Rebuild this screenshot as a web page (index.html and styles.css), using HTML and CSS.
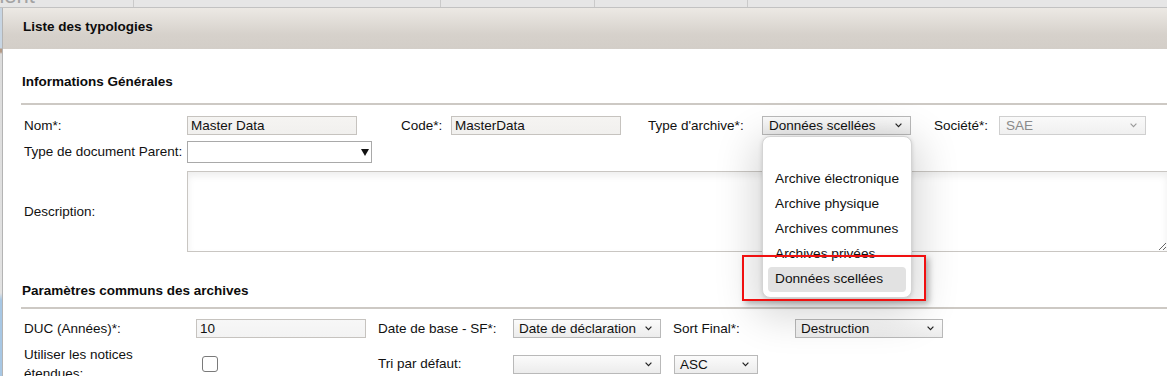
FILE: index.html
```html
<!DOCTYPE html>
<html lang="fr">
<head>
<meta charset="utf-8">
<title>Liste des typologies</title>
<link rel="stylesheet" href="styles.css">
</head>
<body>
<div class="topbar">
  <div class="tab tab1"><span class="ghost">ment</span></div>
  <div class="tab tab2"></div>
  <div class="tab tab3"></div>
  <div class="tab tab4"></div>
  <div class="tab tab5"></div>
</div>
<div class="stage">
  <div class="edge"></div>
  <div class="dialog">
    <div class="dlg-head">Liste des typologies</div>
    <div class="dlg-body">
      <h2 class="sec-title sec1">Informations Générales</h2>

      <div class="row row-a">
        <span class="lbl first w-first1">Nom*:</span>
        <div class="inp w170">Master Data</div>
        <span class="lbl ml44 w50">Code*:</span>
        <div class="inp w170">MasterData</div>
        <span class="lbl ml27 w114">Type d'archive*:</span>
        <div class="sel-wrap">
          <div class="sel w149">Données scellées<svg class="chev" width="7" height="5" viewBox="0 0 7 5"><polyline points="0.6,0.6 3.5,3.6 6.4,0.6" fill="none" stroke="#222" stroke-width="1.2"/></svg></div>
          <div class="dropdown">
            <div class="opt"></div>
            <div class="opt">Archive électronique</div>
            <div class="opt">Archive physique</div>
            <div class="opt">Archives communes</div>
            <div class="opt">Archives privées</div>
            <div class="opt opt-sel">Données scellées</div>
          </div>
          <div class="highlight"></div>
        </div>
        <span class="lbl ml23 w65">Société*:</span>
        <div class="sel sel-off w147">SAE<svg class="chev" width="7" height="5" viewBox="0 0 7 5"><polyline points="0.6,0.6 3.5,3.6 6.4,0.6" fill="none" stroke="#999" stroke-width="1.1"/></svg></div>
      </div>

      <div class="row row-b">
        <span class="lbl first w-first1">Type de document Parent:</span>
        <div class="sel sel-plain w185"><svg class="tri" width="8" height="7" viewBox="0 0 8 7"><polygon points="0,0 8,0 4,7" fill="#111"/></svg></div>
      </div>

      <div class="row row-c">
        <span class="lbl first w-first1">Description:</span>
        <textarea class="desc" aria-label="Description"></textarea>
      </div>

      <h2 class="sec-title sec2">Paramètres communs des archives</h2>

      <div class="row row-d">
        <span class="lbl first w-first2">DUC (Années)*:</span>
        <div class="inp inp-white w170">10</div>
        <span class="lbl ml12 w135">Date de base - SF*:</span>
        <div class="sel w148">Date de déclaration<svg class="chev" width="7" height="5" viewBox="0 0 7 5"><polyline points="0.6,0.6 3.5,3.6 6.4,0.6" fill="none" stroke="#222" stroke-width="1.2"/></svg></div>
        <span class="lbl ml12 w122">Sort Final*:</span>
        <div class="sel w148">Destruction<svg class="chev" width="7" height="5" viewBox="0 0 7 5"><polyline points="0.6,0.6 3.5,3.6 6.4,0.6" fill="none" stroke="#222" stroke-width="1.2"/></svg></div>
      </div>

      <div class="row row-e">
        <span class="lbl first w-first2 two-line"><span class="wrap">Utiliser les notices étendues:</span></span>
        <div class="cell w170"><span class="check"></span></div>
        <span class="lbl ml12 w135">Tri par défaut:</span>
        <div class="sel w148"><svg class="chev" width="7" height="5" viewBox="0 0 7 5"><polyline points="0.6,0.6 3.5,3.6 6.4,0.6" fill="none" stroke="#222" stroke-width="1.2"/></svg></div>
        <div class="sel ml13 w84">ASC<svg class="chev" width="7" height="5" viewBox="0 0 7 5"><polyline points="0.6,0.6 3.5,3.6 6.4,0.6" fill="none" stroke="#222" stroke-width="1.2"/></svg></div>
      </div>
    </div>
  </div>
</div>
</body>
</html>
```
FILE: styles.css
```css
* { box-sizing: border-box; }
html, body { margin: 0; padding: 0; overflow: hidden; }
body {
  width: 1167px;
  height: 376px;
  background: #fff;
  font-family: "Liberation Sans", Arial, sans-serif;
  font-size: 13.5px;
  color: #111;
}

/* background page strip */
.topbar {
  display: flex;
  height: 8px;
  background: #e6e6e6;
  border-bottom: 1px solid #c2c2c2;
  overflow: hidden;
}
.tab { height: 100%; border-right: 1px solid #cacaca; }
.tab1 { width: 134px; }
.tab2 { width: 307px; }
.tab3 { width: 154px; }
.tab4 { width: 153px; }
.tab5 { flex: 1; border-right: 0; }
.ghost {
  display: block;
  font-size: 22px;
  line-height: 22px;
  margin-top: -15px;
  margin-left: -14px;
  color: #a3a3a3;
}

.stage { display: flex; }
.edge {
  flex: none;
  width: 2px;
  height: 368px;
  background: linear-gradient(#c7d5e3 0, #c7d5e3 40px, #b49a86 41px, #b49a86 44px, #dcdcdc 46px, #e2e2e2 285px, #a7c7e4 292px, #a7c7e4 368px);
}
.dialog {
  flex: none;
  width: 1200px;
  border-left: 1px solid #b4b4b4;
}
.dlg-head {
  height: 41px;
  padding: 11px 0 0 20px;
  line-height: 16px;
  font-weight: bold;
  color: #0c0c0c;
  background: linear-gradient(#ece9e4, #d6d1cb 65%, #d3cec8);
}
.dlg-body { padding-left: 18px; }

.sec-title {
  margin: 0;
  font-size: 13.5px;
  font-weight: bold;
  line-height: 16px;
  padding-left: 1px;
  border-bottom: 2px solid #cdc9c4;
  color: #0c0c0c;
}
.sec1 { margin-top: 25px; padding-bottom: 13px; }
.sec2 { margin-top: 31px; padding-bottom: 8px; }

.row { display: flex; align-items: center; }
.row-a { margin-top: 11px; height: 19px; }
.row-b { margin-top: 6px; height: 22px; }
.row-c { margin-top: 8px; }
.row-d { margin-top: 10px; height: 19px; }
.row-e { margin-top: 7px; }

.lbl { flex: none; line-height: 16px; white-space: nowrap; }
.first { padding-left: 3px; }
.w-first1 { width: 166px; }
.w-first2 { width: 175px; }
.two-line { white-space: normal; line-height: 19px; }
.wrap { display: block; width: 140px; }
.w50 { width: 50px; }
.w65 { width: 65px; }
.w114 { width: 114px; }
.w122 { width: 122px; }
.w135 { width: 135px; }
.ml12 { margin-left: 12px; }
.ml13 { margin-left: 13px; }
.ml23 { margin-left: 23px; }
.ml27 { margin-left: 27px; }
.ml44 { margin-left: 44px; }

.w84 { width: 84px; }
.w147 { width: 147px; }
.w148 { width: 148px; }
.w149 { width: 149px; }
.w170 { width: 170px; }
.w185 { width: 185px; }

.inp {
  flex: none;
  height: 19px;
  line-height: 17px;
  padding-left: 3px;
  border: 1px solid #c6c3bf;
  background: linear-gradient(#f5f4f2, #f1f0ee);
  color: #111;
}
.inp-white { background: linear-gradient(#f7f7f7, #f3f3f3); }

.sel {
  flex: none;
  display: flex;
  align-items: center;
  height: 19px;
  padding-left: 5px;
  border: 1px solid #b9b9b9;
  background: linear-gradient(#fbfbfb, #ececec);
  color: #111;
  white-space: nowrap;
}
.chev { margin-left: auto; margin-right: 8px; flex: none; }
.sel-off { color: #8a8a8a; border-color: #cfcfcf; background: linear-gradient(#f9f9f9, #f0f0f0); padding-left: 6px; }
.sel-plain { height: 22px; background: #fff; border-color: #a9a9a9; }
.tri { margin-left: auto; margin-right: 2px; }

.sel-wrap { position: relative; flex: none; }
.sel-wrap .sel { padding-left: 6px; }

.dropdown {
  position: absolute;
  left: 0;
  top: 20px;
  width: 150px;
  padding: 5px;
  background: #fff;
  border: 1px solid #d4d4d4;
  border-radius: 8px;
  box-shadow: 0 10px 40px 8px rgba(0, 0, 0, 0.16), 0 1px 4px rgba(0, 0, 0, 0.15);
  z-index: 5;
}
.opt {
  height: 25px;
  line-height: 24px;
  padding-left: 7px;
  font-size: 13.7px;
  color: #111;
  white-space: nowrap;
}
.opt-sel { background: #e2e2e2; border-radius: 4px; }

.highlight {
  position: absolute;
  left: -20px;
  top: 139px;
  width: 184px;
  height: 46px;
  border: 2.5px solid #f01010;
  box-shadow: 3px 3px 6px rgba(0, 0, 0, 0.28);
  z-index: 6;
}

.desc {
  display: block;
  flex: none;
  width: 981px;
  height: 81px;
  margin: 0;
  border: 1px solid #c9c6c2;
  background: #fff;
  box-shadow: inset 0 4px 7px rgba(0, 0, 0, 0.07);
  resize: both;
  font: inherit;
}

.cell { flex: none; display: flex; align-items: center; }
.check {
  display: block;
  width: 16px;
  height: 16px;
  margin-left: 6px;
  border: 1px solid #7a7a7a;
  border-radius: 3px;
  background: #fff;
}
```
